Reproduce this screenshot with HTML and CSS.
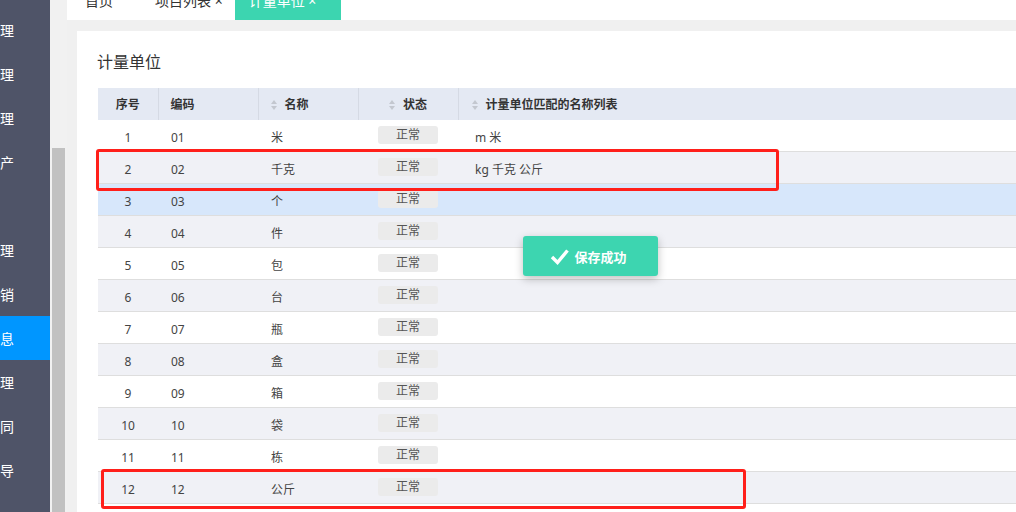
FILE: index.html
```html
<!DOCTYPE html>
<html lang="zh-CN">
<head>
  <meta charset="UTF-8" />
  <title>计量单位</title>
  <link rel="stylesheet" href="styles.css">
</head>
<body>
  <div class="sidebar">
    <div class="nav-item"><span>系统管理</span></div>
    <div class="nav-item"><span>用户管理</span></div>
    <div class="nav-item"><span>项目管理</span></div>
    <div class="nav-item"><span>固定资产</span></div>
    <div class="nav-item"><span></span></div>
    <div class="nav-item"><span>库存管理</span></div>
    <div class="nav-item"><span>推广营销</span></div>
    <div class="nav-item active"><span>基础信息</span></div>
    <div class="nav-item"><span>财务管理</span></div>
    <div class="nav-item"><span>合同</span></div>
    <div class="nav-item"><span>操作向导</span></div>
  </div>
  <div class="scroll-track"><div class="scroll-thumb"></div></div>
  <div class="main">
    <div class="tabs">
      <div class="tab">首页</div>
      <div class="tab">项目列表 ×</div>
      <div class="tab active">计量单位 ×</div>
    </div>
    <div class="content">
      <div class="card">
        <div class="title">计量单位</div>
        <table class="grid">
          <colgroup>
            <col style="width: 60px">
            <col style="width: 100px">
            <col style="width: 100px">
            <col style="width: 100px">
            <col>
          </colgroup>
          <thead>
            <tr>
              <th class="c-no">序号</th>
              <th class="c-code">编码</th>
              <th class="c-name"><i class="sort"></i>名称</th>
              <th class="c-status"><i class="sort"></i>状态</th>
              <th class="c-alias"><i class="sort"></i>计量单位匹配的名称列表</th>
            </tr>
          </thead>
          <tbody id="rows"></tbody>
        </table>
      </div>
    </div>
  </div>

  <div class="mark mark-a"></div>
  <div class="mark mark-b"></div>

  <div class="toast">
    <svg width="19" height="17" viewBox="0 0 19 17"><path d="M2 9 L7.5 14.5 L17.5 2.5" fill="none" stroke="#fff" stroke-width="3.4"/></svg>
    保存成功
  </div>

  <script>
    const units = [
      ["01", "米", "m 米"],
      ["02", "千克", "kg 千克 公斤"],
      ["03", "个", ""],
      ["04", "件", ""],
      ["05", "包", ""],
      ["06", "台", ""],
      ["07", "瓶", ""],
      ["08", "盒", ""],
      ["09", "箱", ""],
      ["10", "袋", ""],
      ["11", "栋", ""],
      ["12", "公斤", ""]
    ];
    const body = document.getElementById("rows");
    units.forEach((u, i) => {
      const cls = i === 2 ? "hover" : (i % 2 ? "even" : "");
      body.innerHTML += `
        <tr class="${cls}">
          <td class="c-no">${i + 1}</td>
          <td class="c-code">${u[0]}</td>
          <td class="c-name">${u[1]}</td>
          <td class="c-status"><span class="badge">正常</span></td>
          <td class="c-alias">${u[2]}</td>
        </tr>`;
    });
  </script>
</body>
</html>
```

FILE: styles.css
```css
body {
  margin: 0;
  display: flex;
  height: 512px;
  overflow: hidden;
  font-family: "Noto Sans", "Noto Sans CJK SC", sans-serif;
  color: #333;
  background: #f0f0f0;
}
.sidebar {
  width: 50px;
  flex: none;
  background: #4f5468;
  padding-top: 8px;
  box-sizing: border-box;
}
.nav-item {
  height: 44px;
  display: flex;
  align-items: center;
  justify-content: flex-end;
  padding-right: 36px;
  overflow: hidden;
  white-space: nowrap;
  color: #fff;
  font-size: 14px;
}
.nav-item span {
  flex: none;
}
.nav-item.active {
  background: #0096ff;
}
.scroll-track {
  width: 17px;
  flex: none;
  background: #f1f1f1;
  padding: 148px 2px 0;
  box-sizing: border-box;
}
.scroll-thumb {
  height: 100%;
  background: #c1c1c1;
}
.main {
  flex: 1;
  min-width: 0;
}
.tabs {
  height: 20px;
  background: #fff;
  display: flex;
  align-items: flex-end;
  overflow: hidden;
  padding-left: 18px;
}
.tab {
  height: 40px;
  line-height: 41px;
  flex: none;
  font-size: 14px;
  color: #333;
  padding: 0 42px 0 0;
}
.tab.active {
  background: #3cd5b0;
  color: #fff;
  padding: 0 10px 0 14px;
  margin-left: -30px;
  width: 82px;
}
.content {
  padding: 11px 0 0 10px;
}
.card {
  background: #fff;
  height: 470px;
  padding: 19px 0 0 21px;
}
.title {
  font-size: 16px;
  line-height: 24px;
  margin: 0 0 14px -1px;
}
.grid {
  border-collapse: collapse;
  width: 940px;
  font-size: 12px;
  table-layout: fixed;
}
.grid th {
  height: 32px;
  background: #e4e9f3;
  font-weight: bold;
  text-align: left;
  border-left: 1px solid #d5dae4;
  padding: 0 0 0 12px;
  color: #333;
}
.grid th:first-child {
  border-left: none;
}
.grid td {
  height: 28px;
  padding: 3px 0 0 13px;
  border-bottom: 1px solid #dedede;
  color: #444;
}
.grid tr.even td {
  background: #f0f1f6;
}
.grid tr.hover td {
  background: #d7e7fb;
}
.grid .c-no,
.grid .c-status {
  text-align: center;
  padding-left: 0;
}
.grid td.c-status {
  padding-top: 0;
}
.grid th.c-alias {
  padding-left: 13px;
}
.grid td.c-alias {
  padding-left: 17px;
}
.badge {
  display: inline-block;
  width: 60px;
  height: 18px;
  line-height: 17px;
  background: #ebebeb;
  border-radius: 3px;
  color: #555;
  position: relative;
  top: -1px;
}
.sort {
  display: inline-block;
  position: relative;
  width: 7px;
  height: 12px;
  margin-right: 7px;
  vertical-align: -2px;
}
.sort::before,
.sort::after {
  content: "";
  position: absolute;
  left: 0;
  border-left: 3.5px solid transparent;
  border-right: 3.5px solid transparent;
}
.sort::before {
  top: 1px;
  border-bottom: 4px solid #c3c7cf;
}
.sort::after {
  top: 7px;
  border-top: 4px solid #c3c7cf;
}
.mark {
  position: absolute;
  border: 3px solid #ff1f1a;
  border-radius: 3px;
  box-sizing: border-box;
}
.mark-a {
  left: 96px;
  top: 149px;
  width: 683px;
  height: 42px;
}
.mark-b {
  left: 101px;
  top: 469px;
  width: 645px;
  height: 40px;
}
.toast {
  position: absolute;
  left: 523px;
  top: 236px;
  width: 135px;
  height: 40px;
  background: #3dd5b0;
  border-radius: 3px;
  box-shadow: 0 3px 8px rgba(0, 0, 0, 0.25);
  color: #fff;
  font-size: 13px;
  font-weight: bold;
  display: flex;
  align-items: center;
  justify-content: center;
  gap: 5px;
  padding-right: 4px;
  box-sizing: border-box;
}
```
